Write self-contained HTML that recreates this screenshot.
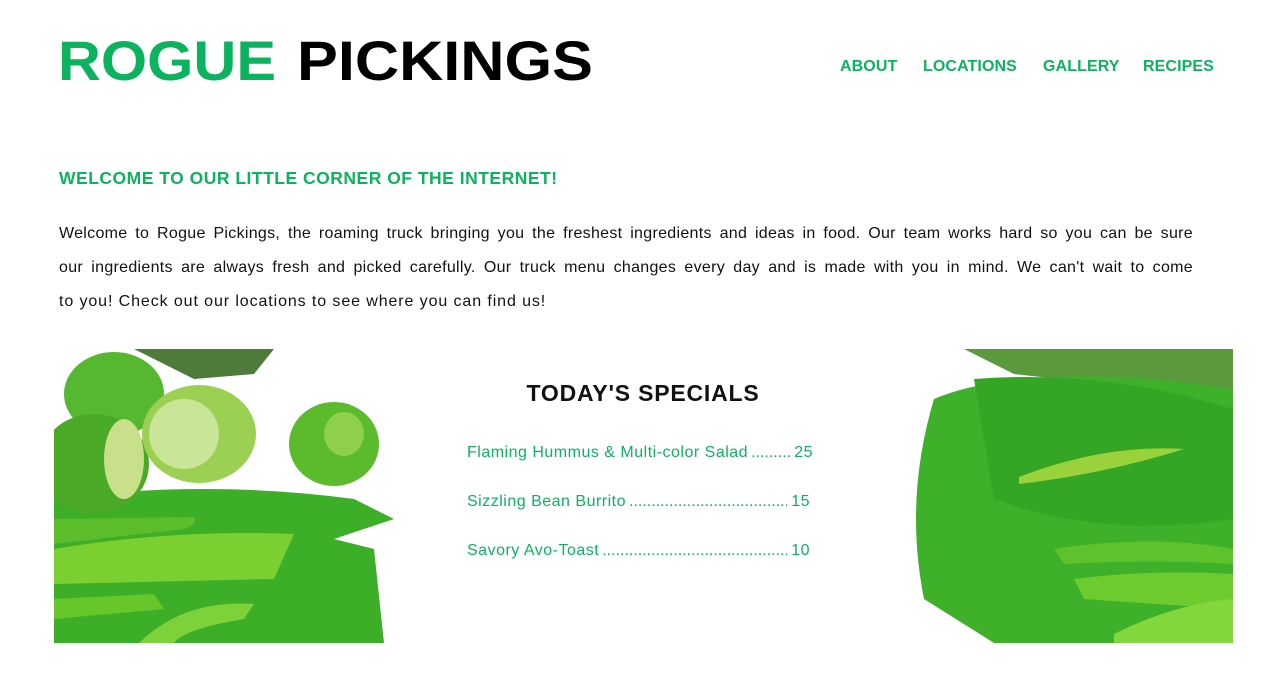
<!DOCTYPE html>
<html><head><meta charset="utf-8"><style>
*{margin:0;padding:0;box-sizing:border-box}
body{width:1280px;height:674px;background:#fff;font-family:"Liberation Sans",sans-serif;position:relative;overflow:hidden}
nav{position:absolute;top:58px;left:0;font-weight:bold;font-size:16px;color:#0bb35e;white-space:nowrap;letter-spacing:0.1px}
nav span{position:absolute}
h2{position:absolute;left:59px;top:168px;font-size:17.5px;color:#0bb35e;font-weight:bold;white-space:nowrap;letter-spacing:0.5px}
.p{position:absolute;left:59px;width:1134px;font-size:16px;color:#111;white-space:nowrap;letter-spacing:0.9px;height:20px;overflow:visible}
.j{text-align:justify;text-align-last:justify;white-space:normal;letter-spacing:0.3px}
.banner{position:absolute;left:54px;top:349px;width:1179px;height:294px}
.sp{position:absolute;left:467px;width:346px;color:#0bb35e;font-size:16px;white-space:nowrap;display:flex;letter-spacing:0.5px}
.sp .d{flex:1;overflow:hidden;margin:0 4px 0 3px;letter-spacing:0}
</style></head><body>
<svg style="position:absolute;left:0;top:0" width="640" height="110">
<text x="58" y="80" font-family="Liberation Sans" font-weight="bold" font-size="56" fill="#0bb35e" textLength="218" lengthAdjust="spacingAndGlyphs">ROGUE</text>
<text x="297" y="80" font-family="Liberation Sans" font-weight="bold" font-size="56" fill="#000" textLength="296" lengthAdjust="spacingAndGlyphs">PICKINGS</text>
</svg>
<nav><span style="left:840px">ABOUT</span><span style="left:923px">LOCATIONS</span><span style="left:1043px">GALLERY</span><span style="left:1143px">RECIPES</span></nav>
<h2>WELCOME TO OUR LITTLE CORNER OF THE INTERNET!</h2>
<div class="p j" style="top:225px">Welcome to Rogue Pickings, the roaming truck bringing you the freshest ingredients and ideas in food. Our team works hard so you can be sure</div>
<div class="p j" style="top:259px">our ingredients are always fresh and picked carefully. Our truck menu changes every day and is made with you in mind. We can't wait to come</div>
<div class="p" style="top:293px">to you! Check out our locations to see where you can find us!</div>
<svg class="banner" width="1179" height="294" viewBox="0 0 1179 294">
<rect width="1179" height="294" fill="#fff"/>
<path d="M80 0 L220 0 L200 25 L140 30 Z" fill="#4e7a3a"/>
<path d="M0 150 Q150 130 300 150 L340 170 L280 190 L320 200 L330 294 L0 294 Z" fill="#3dae28"/>
<path d="M0 200 Q120 180 240 185 L220 230 L0 235 Z" fill="#7ccf30"/>
<path d="M0 170 L140 168 Q145 175 130 180 L0 195 Z" fill="#5cbd2a"/>
<path d="M0 250 L100 245 L110 260 L0 270 Z" fill="#66c62a"/>
<path d="M85 294 Q130 250 200 255 L190 270 Q130 280 120 294 Z" fill="#7dd13a"/>
<ellipse cx="60" cy="45" rx="50" ry="42" fill="#55b830"/>
<ellipse cx="40" cy="115" rx="55" ry="50" fill="#4aaa28"/>
<ellipse cx="70" cy="110" rx="20" ry="40" fill="#c8e08a"/>
<ellipse cx="145" cy="85" rx="57" ry="49" fill="#9cd052"/>
<ellipse cx="130" cy="85" rx="35" ry="35" fill="#c9e597"/>
<ellipse cx="280" cy="95" rx="45" ry="42" fill="#5bbb2c"/>
<ellipse cx="290" cy="85" rx="20" ry="22" fill="#8fd04a"/>
<path d="M910 0 L1179 0 L1179 40 L1050 35 L960 25 Z" fill="#5a9a3c"/>
<path d="M880 50 Q950 20 1100 30 L1179 40 L1179 294 L940 294 L870 250 Q850 150 880 50 Z" fill="#3fb02a"/>
<path d="M920 30 Q1050 20 1179 60 L1179 170 Q1050 190 940 150 Z" fill="#35a526"/>
<path d="M965 128 Q1050 95 1130 100 Q1050 125 965 135 Z" fill="#9ad23c"/>
<path d="M1020 230 Q1100 220 1179 225 L1179 260 Q1100 255 1030 250 Z" fill="#6dcb30"/>
<path d="M1060 285 Q1120 255 1179 250 L1179 294 L1060 294 Z" fill="#82d73c"/>
<path d="M1000 200 Q1100 185 1179 200 L1179 215 Q1100 210 1010 215 Z" fill="#5ec22c"/>
</svg>
<div style="position:absolute;left:0;width:1280px;top:380px;text-align:center;font-size:23px;font-weight:bold;color:#111;padding-left:6px;letter-spacing:0.8px">TODAY'S SPECIALS</div>
<div class="sp" style="top:444px"><span>Flaming Hummus &amp; Multi-color Salad</span><span class="d">..............................................................................................................</span><span>25</span></div>
<div class="sp" style="top:493px;width:343px"><span>Sizzling Bean Burrito</span><span class="d">..............................................................................................................</span><span>15</span></div>
<div class="sp" style="top:542px;width:343px"><span>Savory Avo-Toast</span><span class="d">..............................................................................................................</span><span>10</span></div>
</body></html>
